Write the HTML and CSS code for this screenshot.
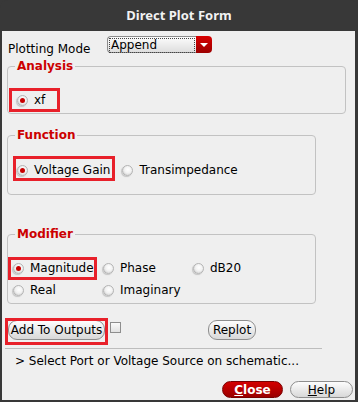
FILE: index.html
```html
<!DOCTYPE html>
<html lang="en">
<head>
    <meta charset="UTF-8">
    <meta name="viewport" content="width=device-width, initial-scale=1.0">
    <title>Direct Plot Form</title>
    <link rel="stylesheet" href="styles.css">
</head>
<body>

<div class="window">
    <div class="titlebar">Direct Plot Form</div>

    <div class="content">
        <div class="mode-row">
            <span class="mode-label">Plotting Mode</span>
            <div class="combo">
                <span class="combo-text"><span class="focus">Append</span></span>
                <span class="combo-arrow"></span>
            </div>
        </div>

        <fieldset class="group group-wide group-analysis">
            <legend>Analysis</legend>
            <div class="opts">
                <label class="opt checked mark mark-xf"><span class="radio"></span>xf</label>
            </div>
        </fieldset>

        <fieldset class="group group-function">
            <legend>Function</legend>
            <div class="opts">
                <label class="opt checked mark mark-gain"><span class="radio"></span>Voltage Gain</label>
                <label class="opt"><span class="radio"></span>Transimpedance</label>
            </div>
        </fieldset>

        <fieldset class="group group-modifier">
            <legend>Modifier</legend>
            <div class="opts-grid">
                <label class="opt checked mark mark-mag"><span class="radio"></span>Magnitude</label>
                <label class="opt"><span class="radio"></span>Phase</label>
                <label class="opt"><span class="radio"></span>dB20</label>
                <label class="opt"><span class="radio"></span>Real</label>
                <label class="opt"><span class="radio"></span>Imaginary</label>
            </div>
        </fieldset>

        <div class="action-row">
            <button class="btn btn-add mark mark-add">Add To Outputs</button>
            <span class="check"></span>
            <button class="btn btn-replot">Replot</button>
        </div>

        <div class="separator"></div>

        <div class="status">&gt; Select Port or Voltage Source on schematic...</div>

        <div class="footer">
            <button class="btn btn-close"><u>C</u>lose</button>
            <button class="btn btn-help"><u>H</u>elp</button>
        </div>
    </div>
</div>

</body>
</html>
```

FILE: styles.css
```css
body {
    margin: 0;
    font-family: "DejaVu Sans", sans-serif;
    font-size: 12px;
    line-height: 14px;
    background: #383838;
}
.window {
    width: 358px;
    height: 402px;
    background: #383838;
    border-radius: 8px 8px 0 0;
    display: flex;
    flex-direction: column;
}
.titlebar {
    height: 31px;
    line-height: 31px;
    text-align: center;
    color: #f2f2f2;
    font-family: "Noto Sans", sans-serif;
    font-weight: bold;
    font-size: 13px;
}
.content {
    margin: 0 3px 2px 2px;
    height: 369px;
    background: #efefef;
    display: flex;
    flex-direction: column;
    color: #000;
}

/* plotting mode */
.mode-row {
    display: flex;
    height: 17px;
    margin-top: 5px;
    padding-left: 6px;
}
.mode-label {
    width: 99px;
    margin-top: 6px;
}
.combo {
    display: flex;
    width: 105px;
    height: 17px;
}
.combo-text {
    flex: 1;
    box-sizing: border-box;
    border: 1px solid #8c8c8c;
    border-right: none;
    border-radius: 4px 0 0 4px;
    background: linear-gradient(#fcfcfc, #dedede);
    padding: 1px;
}
.focus {
    display: block;
    height: 13px;
    border: 1px dotted #444;
    line-height: 12px;
    padding-left: 1px;
}
.combo-arrow {
    width: 16px;
    border-radius: 0 4px 4px 0;
    background: linear-gradient(#d80000, #9c0000);
    display: flex;
    align-items: center;
    justify-content: center;
}
.combo-arrow::before {
    content: '';
    border-left: 4px solid transparent;
    border-right: 4px solid transparent;
    border-top: 4px solid #fff;
}

/* groups */
.group {
    box-sizing: border-box;
    width: 309px;
    margin: 0 0 0 5px;
    border: 1px solid #c2c2c2;
    border-radius: 4px;
    padding: 20px 7px 6px 7px;
    min-inline-size: 0;
}
.group legend {
    padding: 0 2px;
    color: #cc0000;
    font-weight: bold;
    line-height: 14px;
}
.group-wide {
    width: 339px;
}
.group-analysis {
    margin-top: 6px;
}
.group-function {
    margin-top: 14px;
    padding-top: 21px;
    padding-bottom: 17px;
}
.group-modifier {
    margin-top: 32px;
}
.opts {
    display: flex;
    gap: 12px;
    margin-left: 2px;
}
.opts-grid {
    display: grid;
    grid-template-columns: 90px 90px auto;
    row-gap: 8px;
    margin-left: -2px;
}
.opt {
    display: inline-flex;
    align-items: center;
    justify-self: start;
    height: 14px;
}
.radio {
    width: 11px;
    height: 11px;
    box-sizing: border-box;
    border-radius: 50%;
    margin-right: 6px;
    border: 1px solid #b4b4b4;
    background: radial-gradient(circle at 55% 40%, #ffffff 0, #f2f2f2 45%, #c8c8c8 100%);
    box-shadow: -1px 1px 1px rgba(0, 0, 0, 0.18);
    display: flex;
    align-items: center;
    justify-content: center;
}
.checked .radio::before {
    content: '';
    width: 5px;
    height: 5px;
    border-radius: 50%;
    background: #c80000;
}

/* red annotation boxes */
.mark {
    position: relative;
}
.mark::after {
    content: '';
    position: absolute;
    border: 3px solid #e8202a;
    pointer-events: none;
}
.mark-xf::after {
    inset: -5px -15px -5px -8px;
}
.mark-gain::after {
    inset: -7px -5px -4px -4px;
}
.mark-mag::after {
    inset: -4px -3px -5px -5px;
}
.mark-add::after {
    inset: -3px -4px -6px -4px;
}

/* buttons */
.btn {
    font-family: "DejaVu Sans", sans-serif;
    font-size: 12px;
    line-height: 14px;
    color: #000;
    padding: 0;
    border: 1px solid #8e8e8e;
    border-radius: 9px;
    background: linear-gradient(#fdfdfd, #d8d8d8);
}
.action-row {
    display: flex;
    align-items: flex-start;
    margin-top: 16px;
    padding-left: 6px;
}
.btn-add {
    width: 97px;
    height: 20px;
}
.check {
    width: 11px;
    height: 11px;
    box-sizing: border-box;
    margin: 2px 0 0 5px;
    border: 1px solid #8e8e8e;
    background: linear-gradient(#fbfbfb, #e2e2e2);
}
.btn-replot {
    width: 48px;
    height: 20px;
    margin-left: 87px;
}
.separator {
    margin: 8px 0 0 3px;
    width: 317px;
    height: 1px;
    background: #bdbdbd;
}
.status {
    margin-top: 5px;
    padding-left: 13px;
}
.footer {
    display: flex;
    justify-content: flex-end;
    gap: 7px;
    margin-top: 13px;
    padding-right: 2px;
}
.btn-close {
    width: 61px;
    height: 17px;
    color: #fff;
    font-weight: bold;
    border-color: #7a0000;
    background: linear-gradient(#d40000, #9a0000);
}
.btn-help {
    width: 63px;
    height: 17px;
}
```
